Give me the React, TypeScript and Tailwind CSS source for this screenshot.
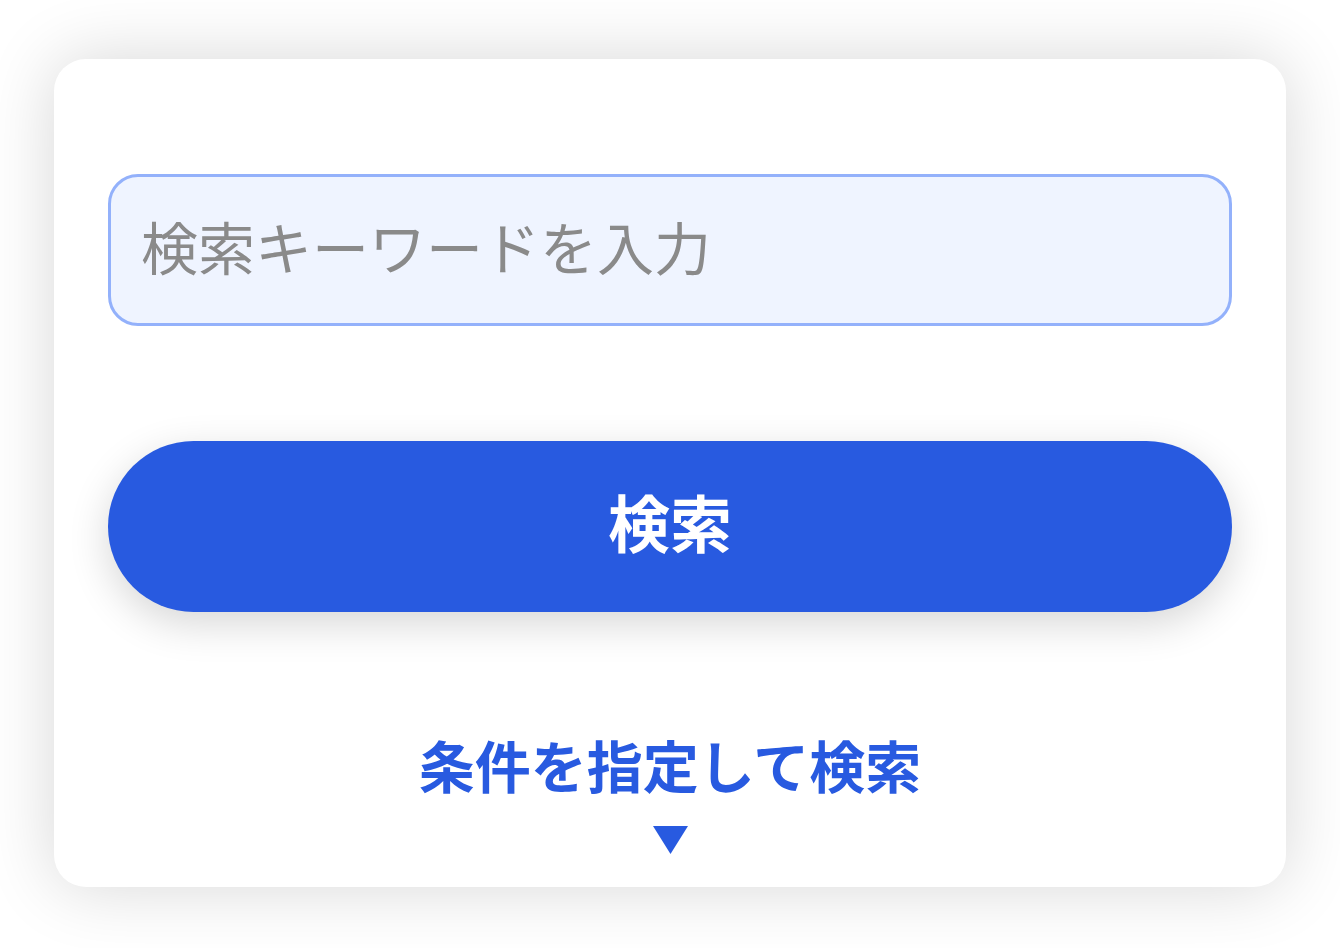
export default function App() {
  return (
    <div
      className="w-[1340px] h-[948px] bg-white px-[54px] pt-[59px]"
      style={{ fontFamily: '"Noto Sans CJK JP", "Noto Sans", sans-serif' }}
    >
      <div className="h-[828px] rounded-[32px] bg-white px-[54px] pt-[115px] shadow-[0_0_70px_rgba(0,0,0,0.16)] flex flex-col">
        <input
          type="text"
          placeholder="検索キーワードを入力"
          className="h-[152px] w-full rounded-[30px] border-[3px] border-[#93b1fb] bg-[#eff4ff] px-[30px] pb-[10px] text-[57px] text-gray-800 placeholder:text-[#8a8a8a] outline-none"
        />

        <button className="mt-[115px] h-[171px] w-full rounded-full bg-[#285ae0] pb-[10px] text-[62px] font-bold text-white shadow-[0_12px_40px_rgba(0,0,0,0.16)]">
          検索
        </button>

        <button className="mt-[118px] flex flex-col items-center text-[#285ae0]">
          <span className="text-[56px] font-bold leading-[68px]">
            条件を指定して検索
          </span>
          <svg width="35" height="28" viewBox="0 0 35 28" className="mt-[28px]">
            <polygon points="0,0 35,0 17.5,28" fill="#285ae0" />
          </svg>
        </button>
      </div>
    </div>
  );
}
